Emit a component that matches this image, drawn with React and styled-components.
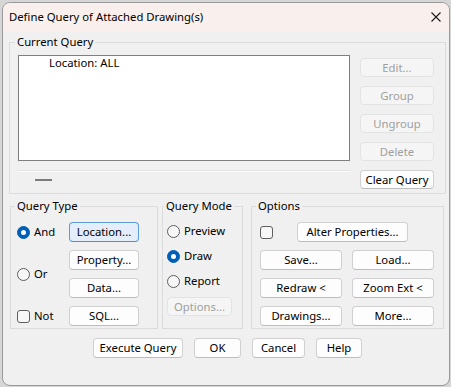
import React from "react";
import styled, { createGlobalStyle, css } from "styled-components";

const GlobalStyle = createGlobalStyle`
  html, body {
    margin: 0;
    padding: 0;
    background: #d6d6d6;
  }
  body {
    font-family: "Noto Sans", "Open Sans", sans-serif;
    font-size: 11.3px;
    color: #000;
  }
`;

const Page = styled.div`
  width: 451px;
  height: 387px;
  padding: 2px;
  box-sizing: border-box;
`;

const Window = styled.div`
  width: 448px;
  height: 384px;
  box-sizing: border-box;
  border: 1px solid #9a9a9a;
  border-radius: 8px;
  background: #f0f0f0;
  overflow: hidden;
  display: flex;
  flex-direction: column;
`;

const TitleBar = styled.div`
  height: 28px;
  flex: none;
  display: flex;
  align-items: center;
  justify-content: space-between;
  padding: 0 8px 0 6px;
  background: #f9f0ee;
  font-size: 11.3px;
  line-height: 14px;
`;

const CloseIcon = () => (
  <svg width="10" height="10" viewBox="0 0 10 10">
    <path d="M0.5 0.5 L9.5 9.5 M9.5 0.5 L0.5 9.5" stroke="#1b1b1b" strokeWidth="1.1" fill="none" />
  </svg>
);

const Body = styled.div`
  padding: 4px 3px 0 6px;
  display: flex;
  flex-direction: column;
`;

const Group = styled.fieldset`
  margin: 0;
  min-width: 0;
  border: 1px solid #dcdcdc;
  border-radius: 0;
  padding: ${(p) => p.$pad};
  box-sizing: border-box;
  ${(p) =>
    p.$width &&
    css`
      width: ${p.$width}px;
      flex: none;
    `}
`;

const Legend = styled.legend`
  padding: 0 2px;
  margin-left: ${(p) => p.$offset}px;
  font-size: 11.3px;
  line-height: 14px;
  white-space: nowrap;
`;

const QueryArea = styled.div`
  display: grid;
  grid-template-columns: 332px 74px;
  column-gap: 10px;
`;

const ListColumn = styled.div`
  display: flex;
  flex-direction: column;
`;

const ListBox = styled.div`
  height: 106px;
  box-sizing: border-box;
  border: 1px solid #7f7f7f;
  background: #fff;
  padding: 0 0 0 30px;
  line-height: 14px;
`;

const TabStrip = styled.div`
  margin-top: 9px;
  height: 19px;
  border-top: 1px solid #e4e4e4;
  box-shadow: inset 0 1px 0 #fbfbfb;
`;

const Dash = styled.div`
  width: 17px;
  height: 2px;
  background: #7c7c7c;
  margin: 8px 0 0 17px;
`;

const ButtonColumn = styled.div`
  display: flex;
  flex-direction: column;
  gap: 9px;
  padding-top: 3px;
`;

const Button = styled.button`
  height: ${(p) => p.$h || 20}px;
  width: ${(p) => (p.$w ? `${p.$w}px` : "100%")};
  padding: 0;
  box-sizing: border-box;
  font-family: "Noto Sans", "Open Sans", sans-serif;
  font-size: 11.3px;
  line-height: 14px;
  white-space: nowrap;
  color: #000;
  background: #fdfdfd;
  border: 1px solid #d0d0d0;
  border-bottom-color: #bdbdbd;
  border-radius: 4px;
  cursor: default;

  &:disabled {
    color: #a0a0a0;
    background: #f5f5f5;
    border-color: #e3e3e3;
  }

  ${(p) =>
    p.$focused &&
    css`
      background: #e3eefa;
      border-color: #5a9bd8;
      border-bottom-color: #4d8fcf;
    `}
`;

const BottomRow = styled.div`
  margin: 5px 1px 0 1px;
  display: flex;
  align-items: stretch;
`;

const TypeGrid = styled.div`
  display: grid;
  grid-template-columns: 52px 70px;
  grid-template-rows: repeat(4, 20px);
  row-gap: 8px;
`;

const Choice = styled.label`
  display: flex;
  align-items: center;
  gap: 4px;
  height: 20px;
  line-height: 14px;
  white-space: nowrap;
  ${(p) =>
    p.$row &&
    css`
      grid-row: ${p.$row};
      grid-column: 1;
      align-self: center;
    `}
`;

const RadioMark = styled.span`
  width: 13px;
  height: 13px;
  box-sizing: border-box;
  border-radius: 50%;
  flex: none;
  ${(p) =>
    p.$checked
      ? css`
          background: #005fb8;
          border: 1px solid #005fb8;
          display: flex;
          align-items: center;
          justify-content: center;
          &::after {
            content: "";
            width: 5px;
            height: 5px;
            border-radius: 50%;
            background: #fff;
          }
        `
      : css`
          background: #f7f7f7;
          border: 1px solid #5e5e5e;
        `}
`;

const CheckMark = styled.span`
  width: 13px;
  height: 13px;
  box-sizing: border-box;
  border: 1px solid #5e5e5e;
  border-radius: 3px;
  background: #f7f7f7;
  flex: none;
`;

const TypeButton = styled(Button)`
  grid-column: 2;
  grid-row: ${(p) => p.$row};
`;

const ModeList = styled.div`
  display: flex;
  flex-direction: column;
  gap: 5px;
`;

const OptionsGrid = styled.div`
  display: grid;
  grid-template-columns: 82px 82px;
  grid-template-rows: repeat(4, 20px);
  column-gap: 10px;
  row-gap: 8px;
`;

const OptionsTop = styled.div`
  grid-column: 1 / span 2;
  display: flex;
  align-items: center;
  gap: 24px;
`;

const Footer = styled.div`
  margin-top: 9px;
  display: flex;
  justify-content: center;
  gap: 11px;
`;

const Radio = ({ checked, children, row }) => (
  <Choice $row={row}>
    <RadioMark $checked={checked} />
    {children}
  </Choice>
);

export default function App() {
  return (
    <Page>
      <GlobalStyle />
      <Window>
        <TitleBar>
          <span>Define Query of Attached Drawing(s)</span>
          <CloseIcon />
        </TitleBar>
        <Body>
          <Group $pad="6px 10px 3px 8px">
            <Legend $offset={-3}>Current Query</Legend>
            <QueryArea>
              <ListColumn>
                <ListBox>Location: ALL</ListBox>
                <TabStrip>
                  <Dash />
                </TabStrip>
              </ListColumn>
              <ButtonColumn>
                <Button $h={19} disabled>Edit...</Button>
                <Button $h={19} disabled>Group</Button>
                <Button $h={19} disabled>Ungroup</Button>
                <Button $h={19} disabled>Delete</Button>
                <Button $h={19}>Clear Query</Button>
              </ButtonColumn>
            </QueryArea>
          </Group>

          <BottomRow>
            <Group $width={148} $pad="9px 6px 2px 6px">
              <Legend $offset={-2}>Query Type</Legend>
              <TypeGrid>
                <Radio checked row="1">And</Radio>
                <Radio row="2 / span 2">Or</Radio>
                <Choice $row="4">
                  <CheckMark />
                  Not
                </Choice>
                <TypeButton $focused $row={1}>Location...</TypeButton>
                <TypeButton $row={2}>Property...</TypeButton>
                <TypeButton $row={3}>Data...</TypeButton>
                <TypeButton $row={4}>SQL...</TypeButton>
              </TypeGrid>
            </Group>

            <Group $width={81} $pad="8px 4px 2px 4px" style={{ marginLeft: 4 }}>
              <Legend $offset={-3}>Query Mode</Legend>
              <ModeList>
                <Radio>Preview</Radio>
                <Radio checked>Draw</Radio>
                <Radio>Report</Radio>
                <Button $h={19} $w={65} disabled style={{ marginTop: 1 }}>
                  Options...
                </Button>
              </ModeList>
            </Group>

            <Group $width={193} $pad="9px 8px 2px 8px" style={{ marginLeft: 8 }}>
              <Legend $offset={-4}>Options</Legend>
              <OptionsGrid>
                <OptionsTop>
                  <CheckMark />
                  <Button $w={111}>Alter Properties...</Button>
                </OptionsTop>
                <Button>Save...</Button>
                <Button>Load...</Button>
                <Button>Redraw &lt;</Button>
                <Button>Zoom Ext &lt;</Button>
                <Button>Drawings...</Button>
                <Button>More...</Button>
              </OptionsGrid>
            </Group>
          </BottomRow>

          <Footer>
            <Button $w={90}>Execute Query</Button>
            <Button $w={47}>OK</Button>
            <Button $w={53}>Cancel</Button>
            <Button $w={46}>Help</Button>
          </Footer>
        </Body>
      </Window>
    </Page>
  );
}
